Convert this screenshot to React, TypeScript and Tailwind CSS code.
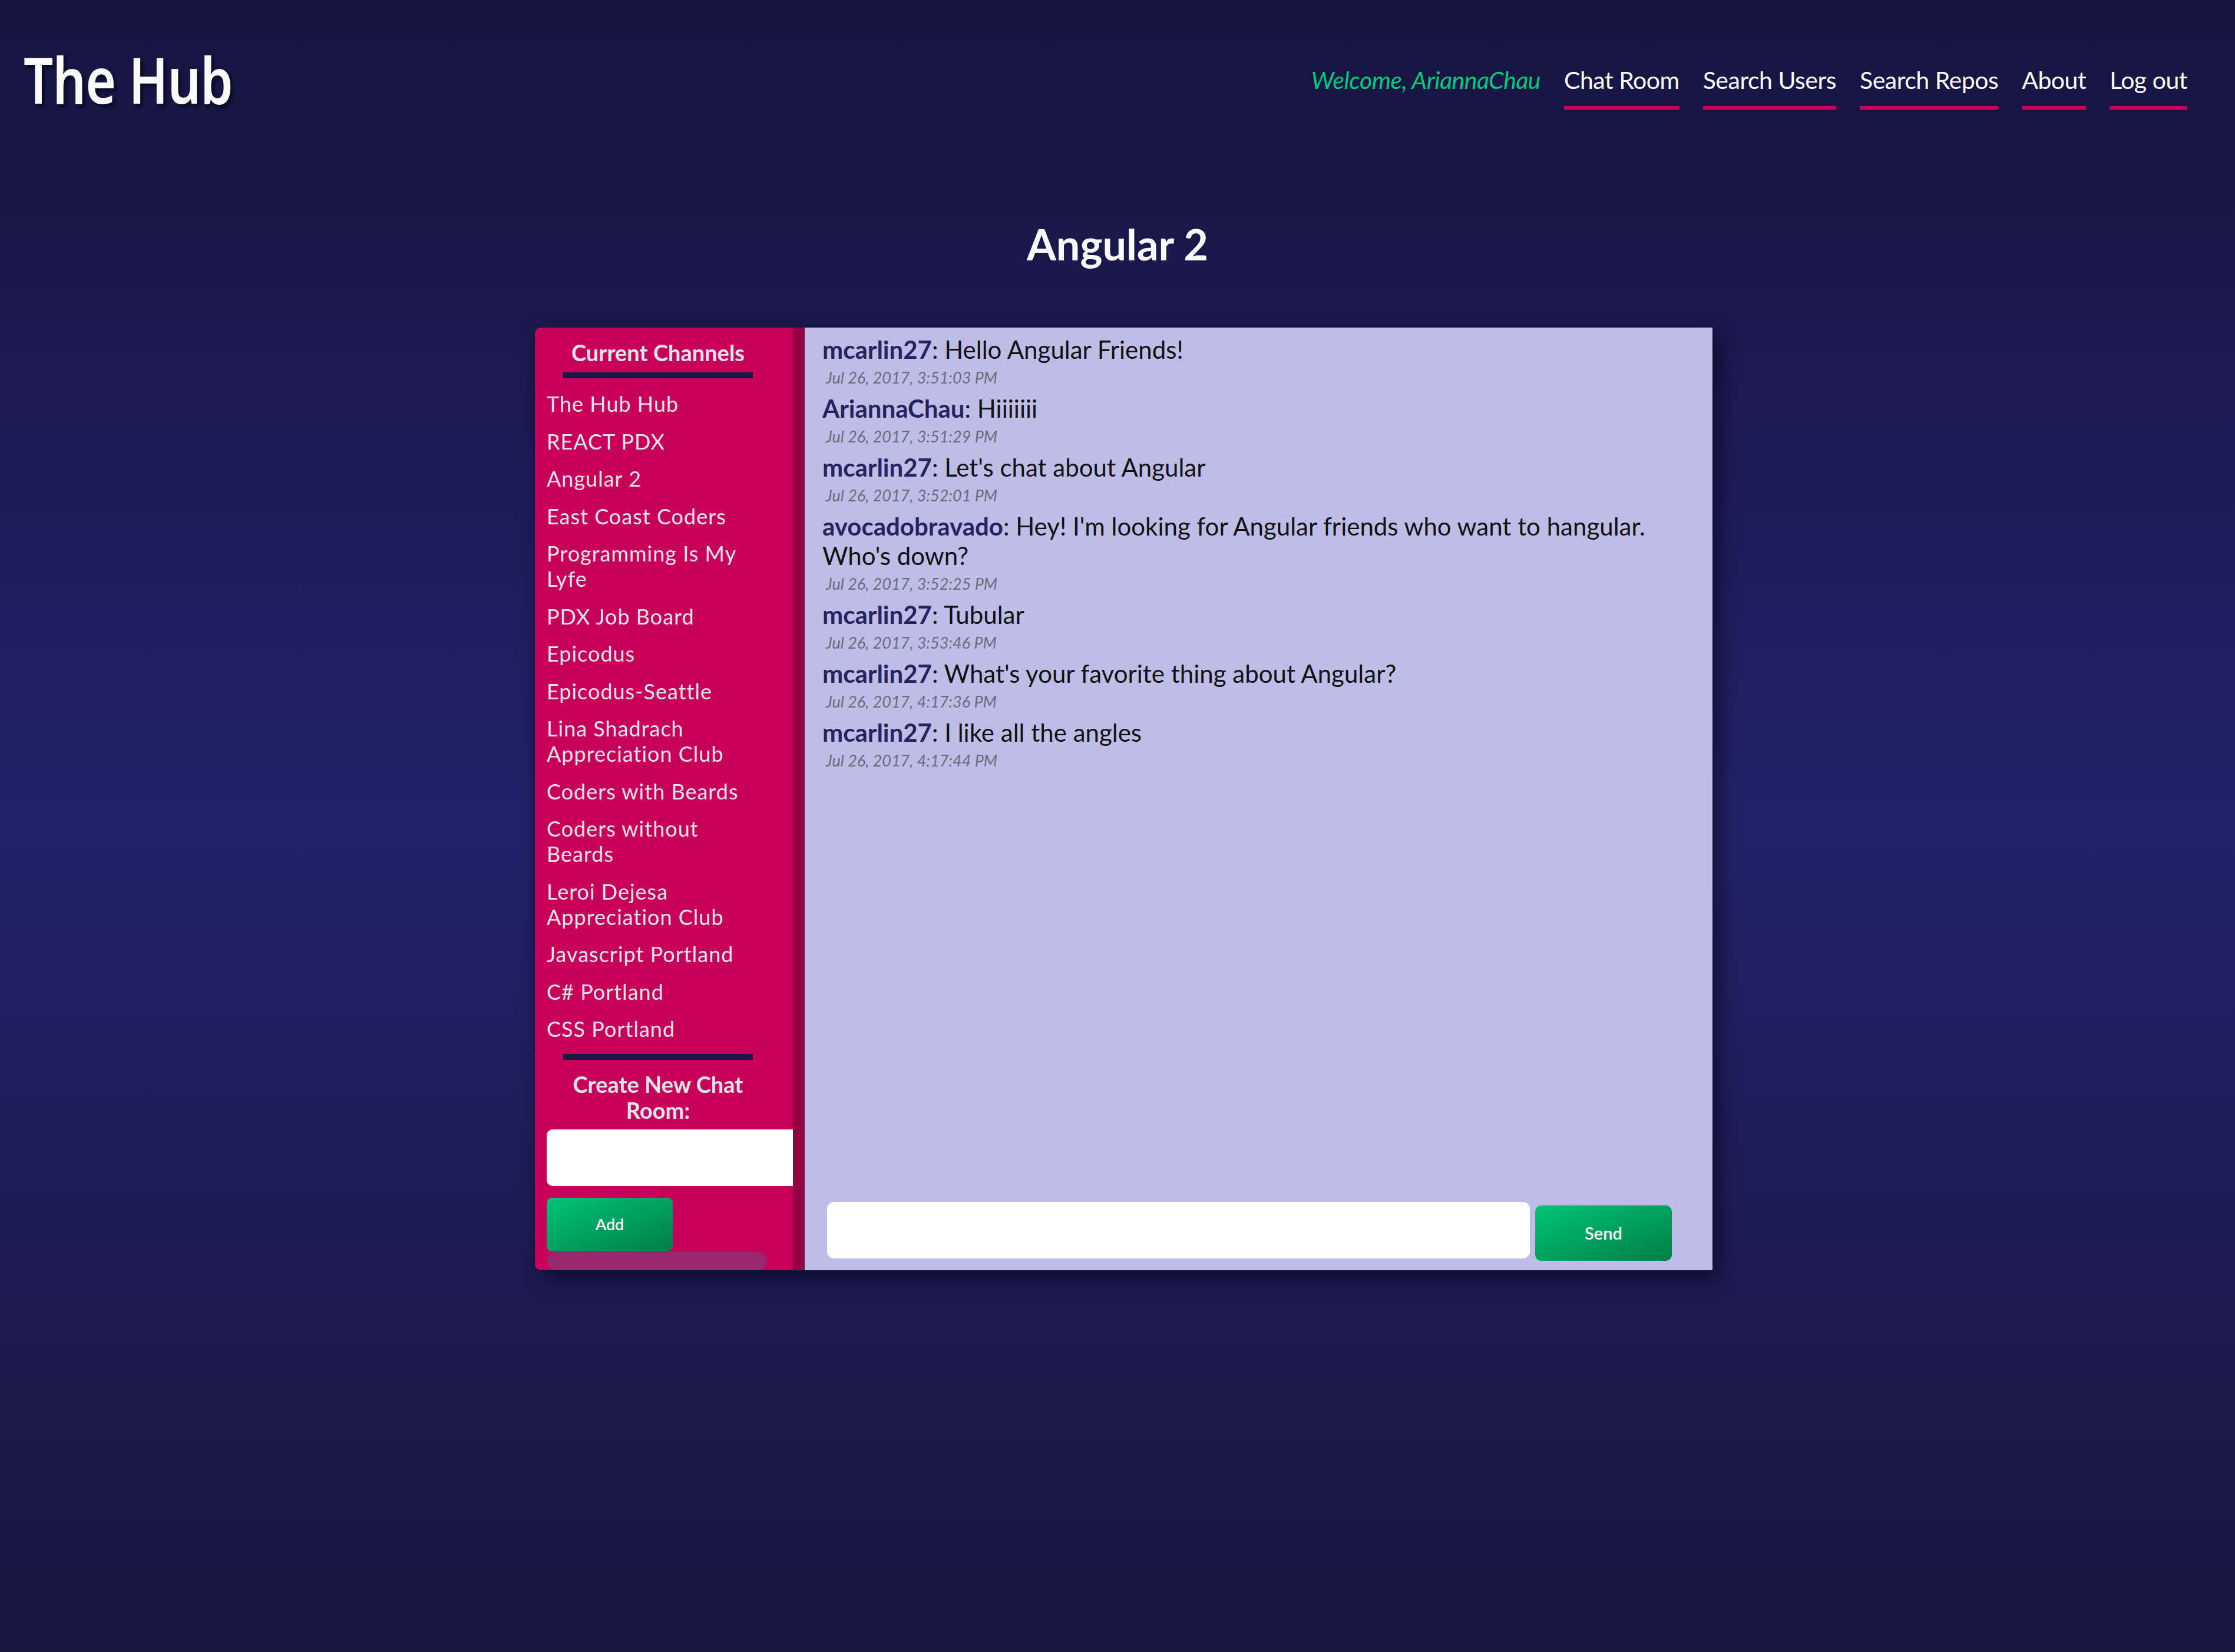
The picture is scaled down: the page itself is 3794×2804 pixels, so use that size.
import React from "react";

const channels = [
  "The Hub Hub",
  "REACT PDX",
  "Angular 2",
  "East Coast Coders",
  "Programming Is My Lyfe",
  "PDX Job Board",
  "Epicodus",
  "Epicodus-Seattle",
  "Lina Shadrach Appreciation Club",
  "Coders with Beards",
  "Coders without Beards",
  "Leroi Dejesa Appreciation Club",
  "Javascript Portland",
  "C# Portland",
  "CSS Portland",
];

const messages = [
  { user: "mcarlin27", text: "Hello Angular Friends!", time: "Jul 26, 2017, 3:51:03 PM" },
  { user: "AriannaChau", text: "Hiiiiiii", time: "Jul 26, 2017, 3:51:29 PM" },
  { user: "mcarlin27", text: "Let's chat about Angular", time: "Jul 26, 2017, 3:52:01 PM" },
  {
    user: "avocadobravado",
    text: "Hey! I'm looking for Angular friends who want to hangular. Who's down?",
    time: "Jul 26, 2017, 3:52:25 PM",
  },
  { user: "mcarlin27", text: "Tubular", time: "Jul 26, 2017, 3:53:46 PM" },
  { user: "mcarlin27", text: "What's your favorite thing about Angular?", time: "Jul 26, 2017, 4:17:36 PM" },
  { user: "mcarlin27", text: "I like all the angles", time: "Jul 26, 2017, 4:17:44 PM" },
];

const navLinks = ["Chat Room", "Search Users", "Search Repos", "About", "Log out"];

const App = () => {
  return (
    <div className="min-h-[2804px] w-full bg-linear-to-b from-[#16143f] via-[#22226a] to-[#18163f] font-['Lato',_'Noto_Sans',_sans-serif]">
      {/* Header */}
      <header className="flex justify-between items-start pl-[40px] pr-[81px]">
        <h1 className="mt-[81px] origin-left scale-x-[0.82] text-[108px] leading-[108px] font-semibold text-[#fafafa] font-['Noto_Sans',_'Open_Sans',_sans-serif] tracking-[-1px] [text-shadow:5px_5px_6px_rgba(5,5,25,0.75)]">
          The Hub
        </h1>
        <nav className="mt-[111px] flex gap-[40px]">
          <span className="text-[41px] leading-[50px] italic text-[#00c97a] tracking-[-0.5px]">
            Welcome, AriannaChau
          </span>
          {navLinks.map((link) => (
            <div key={link} className="flex flex-col">
              <a className="text-[41px] leading-[50px] text-white tracking-[-0.5px]">{link}</a>
              <div className="mt-[19px] h-[6px] bg-[#c8005a]" />
            </div>
          ))}
        </nav>
      </header>

      {/* Room title */}
      <h2 className="mt-[182px] text-center text-[72px] leading-[86px] font-bold text-[#fafafa]">Angular 2</h2>

      {/* Chat box */}
      <div className="mt-[99px] flex justify-center pl-[21px]">
        <div className="flex w-[1999px] h-[1600px] shadow-[10px_12px_34px_rgba(8,6,28,0.7)] rounded-l-[10px]">
          {/* Sidebar */}
          <aside className="flex w-[458px] bg-[#c6005a] rounded-l-[10px] overflow-hidden">
            <div className="w-[438px] flex flex-col overflow-hidden pl-[20px] pr-[40px] pt-[20px] text-[#e6e3e8]">
              <h3 className="text-center text-[38px] leading-[44px] font-bold">Current Channels</h3>
              <div className="mt-[12px] mx-auto w-[322px] h-[10px] bg-[#1b1747]" />
              <ul className="mt-[22px] pr-[20px] flex flex-col gap-[20.5px]">
                {channels.map((c) => (
                  <li key={c} className="text-[36px] leading-[43px] tracking-[1px]">
                    {c}
                  </li>
                ))}
              </ul>
              <div className="mt-[21px] mx-auto w-[322px] h-[10px] shrink-0 bg-[#1b1747]" />
              <h3 className="mt-[19px] text-center text-[38px] leading-[44px] font-bold">
                Create New Chat Room:
              </h3>
              <input
                type="text"
                className="mt-[11px] w-[470px] h-[96px] shrink-0 bg-white rounded-[10px] outline-none"
              />
              <button className="mt-[20px] w-[214px] h-[91px] shrink-0 rounded-[9px] bg-linear-to-br from-[#00c674] to-[#007e48] text-white text-[27px] font-semibold">
                Add
              </button>
              <div className="mt-px w-[374px] h-[31px] shrink-0 rounded-full bg-[#9b2771]" />
            </div>
            <div className="w-[20px] bg-[#930041]" />
          </aside>

          {/* Messages */}
          <section className="flex-1 flex flex-col justify-between bg-[#bdbde7]">
            <div className="pl-[30px] pr-[30px] pt-[12px] flex flex-col gap-[12px]">
              {messages.map((m, i) => (
                <div key={i} className="flex flex-col">
                  <p className="text-[42px] leading-[50px] text-[#111111]">
                    <span className="font-bold text-[#27235f]">{m.user}</span>: {m.text}
                  </p>
                  <p className="mt-[8px] pl-[6px] text-[27px] leading-[30px] italic text-[#6c6c7e]">{m.time}</p>
                </div>
              ))}
            </div>
            <div className="flex items-start gap-[9px] pl-[38px] pb-[16px]">
              <input
                type="text"
                className="w-[1193px] h-[96px] bg-white rounded-[12px] outline-none"
              />
              <button className="mt-[6px] w-[232px] h-[94px] rounded-[10px] bg-linear-to-br from-[#00c674] to-[#007e48] text-white text-[29px] font-semibold">
                Send
              </button>
            </div>
          </section>
        </div>
      </div>
    </div>
  );
};

export default App;
